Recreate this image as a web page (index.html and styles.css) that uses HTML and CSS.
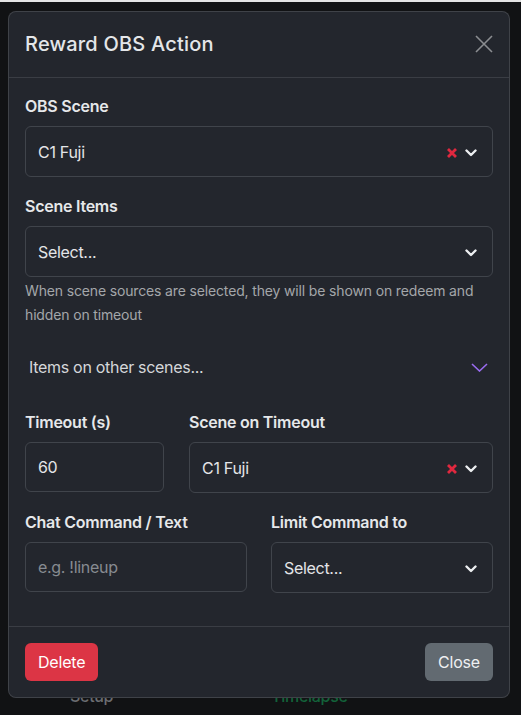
FILE: index.html
```html
<!DOCTYPE html>
<html lang="en">
<head>
<meta charset="utf-8">
<title>Reward OBS Action</title>
<link rel="stylesheet" href="styles.css">
</head>
<body>
<div class="page">
  <div class="topline"></div>
  <div class="toolbar">
    <span class="tb tb-gray"></span>
    <span class="tb tb-light"></span>
    <span class="tb tb-purple"></span>
    <span class="tb tb-tan"></span>
  </div>
  <div class="tabs">
    <span class="tab">Setup</span>
    <span class="tab tab-active">Timelapse</span>
  </div>
</div>

<div class="modal">
  <div class="modal-header">
    <h5 class="modal-title">Reward OBS Action</h5>
    <svg class="btn-close" width="18" height="18" viewBox="0 0 18 18"><path d="M1 1L17 17M17 1L1 17" stroke="currentColor" stroke-width="1.6" fill="none"/></svg>
  </div>
  <div class="modal-body">
    <div class="field">
      <label class="label">OBS Scene</label>
      <div class="select">
        <span class="select-value">C1 Fuji</span>
        <svg class="clear" width="10" height="10" viewBox="0 0 10 10"><path d="M1 1L9 9M9 1L1 9" stroke="currentColor" stroke-width="2.8" fill="none"/></svg>
        <svg class="chev" width="12" height="8" viewBox="0 0 12 8"><path d="M1.5 1.5L6 6L10.5 1.5" stroke="currentColor" stroke-width="2.4" fill="none" stroke-linecap="round" stroke-linejoin="round"/></svg>
      </div>
    </div>
    <div class="field field-help">
      <label class="label">Scene Items</label>
      <div class="select">
        <span class="select-value">Select...</span>
        <svg class="chev" width="12" height="8" viewBox="0 0 12 8"><path d="M1.5 1.5L6 6L10.5 1.5" stroke="currentColor" stroke-width="2.4" fill="none" stroke-linecap="round" stroke-linejoin="round"/></svg>
      </div>
      <div class="help">When scene sources are selected, they will be shown on redeem and hidden on timeout</div>
    </div>
    <div class="accordion">
      <span>Items on other scenes...</span>
      <svg class="acc-chev" width="17" height="9" viewBox="0 0 17 9"><path d="M1 1L8.5 8L16 1" stroke="currentColor" stroke-width="1.6" fill="none"/></svg>
    </div>
    <div class="row row-timeout">
      <div class="col">
        <label class="label">Timeout (s)</label>
        <div class="input">60</div>
      </div>
      <div class="col">
        <label class="label">Scene on Timeout</label>
        <div class="select">
          <span class="select-value">C1 Fuji</span>
          <svg class="clear" width="10" height="10" viewBox="0 0 10 10"><path d="M1 1L9 9M9 1L1 9" stroke="currentColor" stroke-width="2.8" fill="none"/></svg>
          <svg class="chev" width="12" height="8" viewBox="0 0 12 8"><path d="M1.5 1.5L6 6L10.5 1.5" stroke="currentColor" stroke-width="2.4" fill="none" stroke-linecap="round" stroke-linejoin="round"/></svg>
        </div>
      </div>
    </div>
    <div class="row row-command">
      <div class="col">
        <label class="label">Chat Command / Text</label>
        <div class="input placeholder">e.g. !lineup</div>
      </div>
      <div class="col">
        <label class="label">Limit Command to</label>
        <div class="select">
          <span class="select-value">Select...</span>
          <svg class="chev" width="12" height="8" viewBox="0 0 12 8"><path d="M1.5 1.5L6 6L10.5 1.5" stroke="currentColor" stroke-width="2.4" fill="none" stroke-linecap="round" stroke-linejoin="round"/></svg>
        </div>
      </div>
    </div>
  </div>
  <div class="modal-footer">
    <button class="btn btn-danger">Delete</button>
    <button class="btn btn-secondary">Close</button>
  </div>
</div>
</body>
</html>
```

FILE: styles.css
```css
* { box-sizing: border-box; }

html, body {
  margin: 0;
  height: 100%;
}

body {
  background: #111214;
  font-family: Inter, "Noto Sans", sans-serif;
  color: #e1e3e6;
  font-size: 16px;
  line-height: 24px;
  letter-spacing: -0.3px;
  overflow: hidden;
}

.page {
  height: 715px;
  display: flex;
  flex-direction: column;
}

.topline {
  height: 2px;
  background: #e3e3e3;
}

.toolbar {
  display: flex;
  margin-top: 9px;
  height: 12px;
  padding-left: 240px;
}

.tb { display: block; height: 12px; }
.tb-gray { width: 15px; background: #55585e; margin-right: 60px; }
.tb-light { width: 8px; background: #9a9b9d; margin-right: 25px; }
.tb-purple { width: 22px; background: #6a3fb8; margin-right: 8px; }
.tb-tan { width: 32px; background: #8a7560; }

.tabs {
  margin-top: auto;
  margin-bottom: 7px;
  display: flex;
  padding-left: 70px;
  font-weight: 500;
}

.tab { color: #6b6d71; }
.tab-active { color: #13623a; margin-left: 158px; }

.modal {
  position: absolute;
  top: 11px;
  left: 8px;
  width: 502px;
  background: #23262d;
  border: 1px solid rgba(255, 255, 255, 0.13);
  border-radius: 8px;
}

.modal-header {
  display: flex;
  align-items: center;
  justify-content: space-between;
  padding: 17px 16px 18px;
  border-bottom: 1px solid #3a3d44;
}

.modal-title {
  margin: 0;
  font-size: 20px;
  line-height: 30px;
  font-weight: 500;
  letter-spacing: 0.2px;
  color: #e4e6e9;
}

.btn-close { color: #8b8d91; }

.modal-body {
  padding: 16px 16px 17px;
}

.field { margin-bottom: 17px; }
.field-help { margin-bottom: 16px; }

.label {
  display: block;
  font-weight: 600;
  font-size: 16px;
  line-height: 24px;
  margin-bottom: 8px;
  letter-spacing: -0.25px;
  color: #e6e8ea;
}

.select {
  height: 51px;
  border: 1px solid #40444b;
  border-radius: 6px;
  display: flex;
  align-items: center;
  padding: 0 15px 0 12px;
  color: #e3e5e8;
}

.select-value { flex: 1; }

.clear {
  color: #e0283f;
  margin-right: 8px;
  margin-top: 2px;
}

.chev {
  color: #eceef0;
  margin-top: 2px;
}

.input {
  height: 50px;
  border: 1px solid #40444b;
  border-radius: 6px;
  display: flex;
  align-items: center;
  padding: 0 12px;
  color: #e3e5e8;
}

.input.placeholder { color: #878b91; }

.help {
  margin-top: 2px;
  font-size: 14px;
  line-height: 24px;
  letter-spacing: -0.15px;
  color: #a3a6aa;
}

.accordion {
  height: 48px;
  display: flex;
  align-items: center;
  justify-content: space-between;
  padding: 0 5px 0 4px;
  color: #d5d7da;
  margin-bottom: 19px;
}

.acc-chev { color: #9a6cf0; }

.row {
  display: grid;
  margin-bottom: 17px;
}

.row-timeout {
  grid-template-columns: 139px 1fr;
  column-gap: 25px;
}

.row-command {
  grid-template-columns: 1fr 1fr;
  column-gap: 24px;
  margin-bottom: 16px;
}

.modal-footer {
  display: flex;
  justify-content: space-between;
  padding: 16px;
  border-top: 1px solid #3a3d44;
}

.btn {
  font-family: inherit;
  font-size: 16px;
  line-height: 24px;
  letter-spacing: -0.2px;
  padding: 6px 12px;
  border: 1px solid transparent;
  border-radius: 6px;
  color: #ffffff;
}

.btn-danger { background: #dc3545; }
.btn-secondary { background: #626a71; color: #eef0f2; }
```
